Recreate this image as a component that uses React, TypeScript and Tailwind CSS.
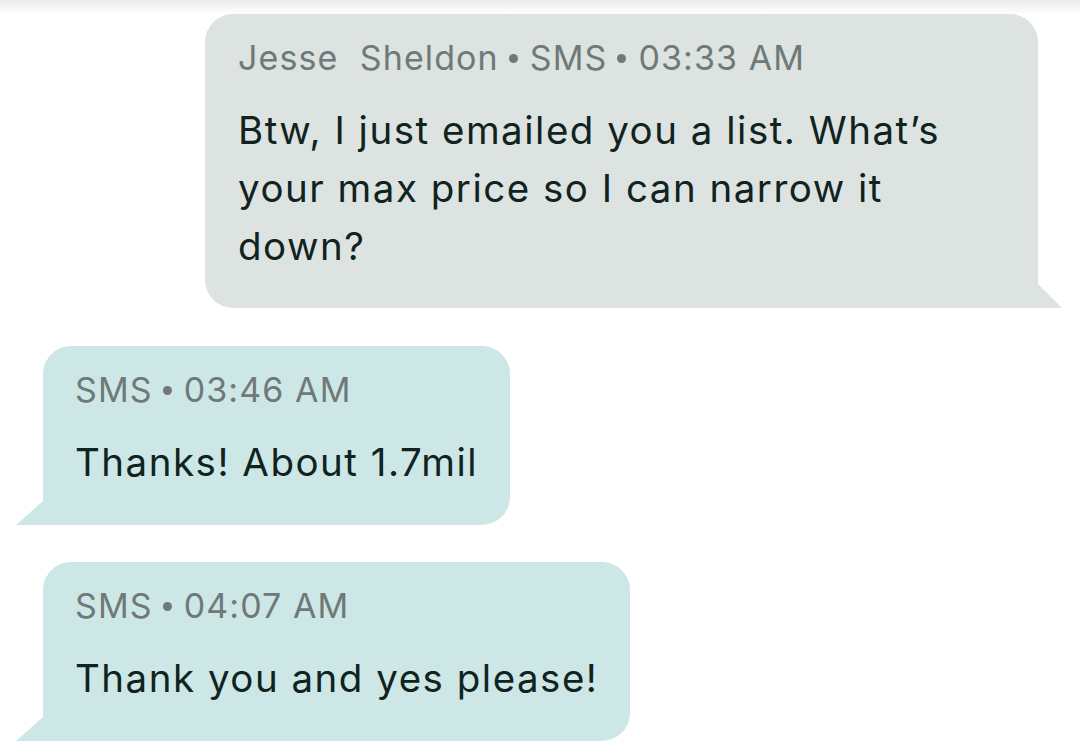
const font = { fontFamily: "Inter, Roboto, 'Noto Sans', sans-serif" };

type Msg = { meta: string; text: string; outgoing?: boolean };

const messages: Msg[] = [
  {
    meta: "Jesse\u00a0\u00a0Sheldon • SMS • 03:33 AM",
    text: "Btw, I just emailed you a list. What’s your max price so I can narrow it down?",
    outgoing: true,
  },
  { meta: "SMS • 03:46 AM", text: "Thanks! About 1.7mil" },
  { meta: "SMS • 04:07 AM", text: "Thank you and yes please!" },
];

function Bubble({ meta, text, outgoing }: Msg) {
  const parts = meta.split(" • ");
  return (
    <div className={outgoing ? "relative self-end mr-[42px] mb-[1px] w-[833px]" : "relative self-start ml-[43px]"}>
      <div
        className={
          outgoing
            ? "rounded-[28px] rounded-br-none bg-[#dce3e1] pl-[33px] pr-[70px] pt-[24px] pb-[33px]"
            : "rounded-[28px] rounded-bl-none bg-[#cde7e6] pl-[32px] pr-[32px] pt-[24px] pb-[34px]"
        }
      >
        <div className="text-[34px] leading-[40px] tracking-[1.1px] text-[#6f7977] whitespace-nowrap">
          {parts.map((p, i) => (
            <span key={i}>
              {i > 0 && <span className="inline-block ml-[10px] mr-[12px] w-[9px] h-[9px] rounded-full bg-[#6f7977] align-[7px]" />}
              {p}
            </span>
          ))}
        </div>
        <p className="mt-[23px] text-[38.5px] leading-[58px] tracking-[1.5px] text-[#10231f]">{text}</p>
      </div>
      {outgoing ? (
        <svg className="absolute bottom-0 -right-[25px]" width="26" height="25" viewBox="0 0 26 25">
          <path d="M0 0 L25 25 L0 25 Z" fill="#dce3e1" />
        </svg>
      ) : (
        <svg className="absolute bottom-0 -left-[27px]" width="28" height="25" viewBox="0 0 28 25">
          <path d="M28 0 L28 25 L0 25 Z" fill="#cde7e6" />
        </svg>
      )}
    </div>
  );
}

export default function App() {
  return (
    <div className="w-[1080px] h-[754px] bg-white overflow-hidden" style={font}>
      <div className="h-[14px] bg-gradient-to-b from-[#ececec] to-white" />
      <div className="flex flex-col gap-[37px]">
        {messages.map((m, i) => (
          <Bubble key={i} {...m} />
        ))}
      </div>
    </div>
  );
}
